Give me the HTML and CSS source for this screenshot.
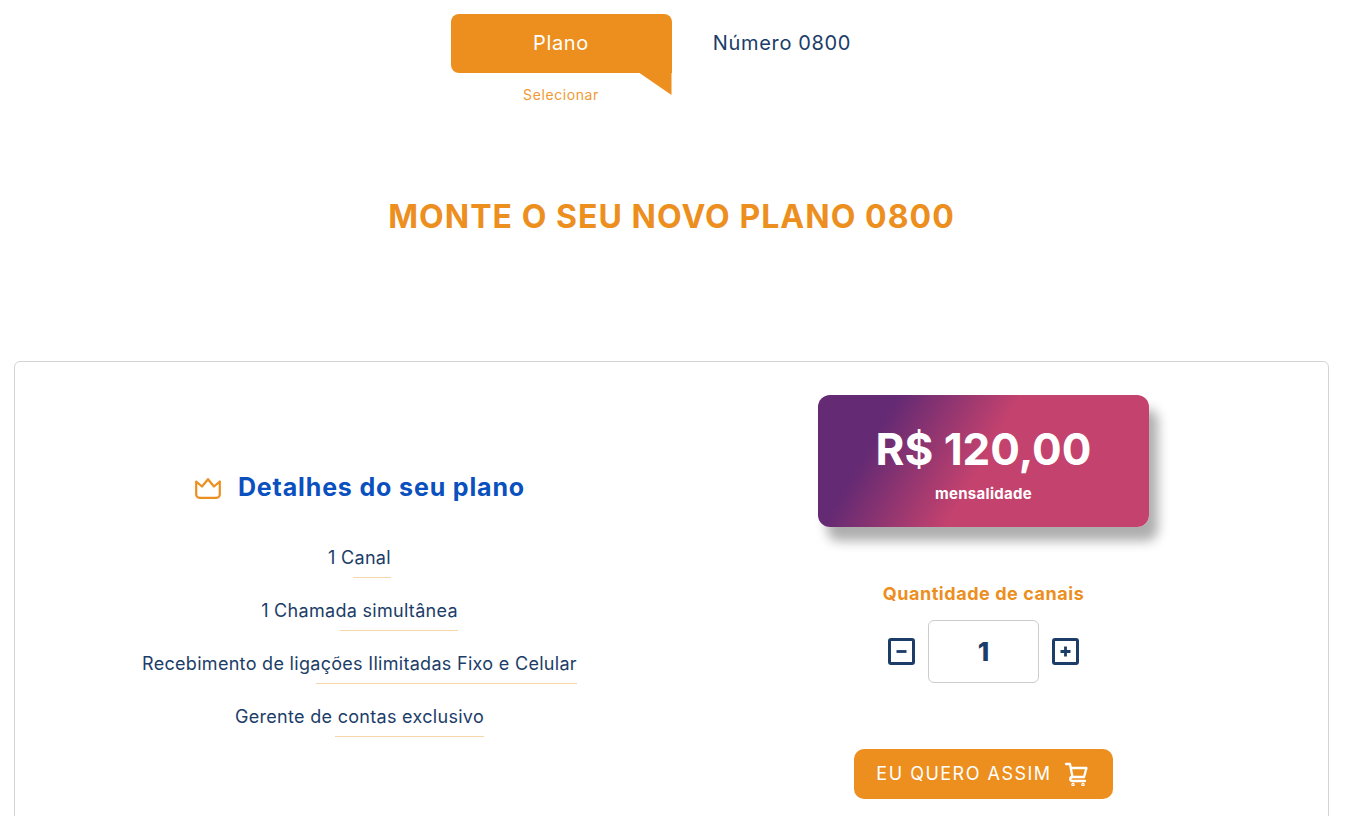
FILE: index.html
```html
<!DOCTYPE html>
<html lang="pt-BR">
<head>
  <meta charset="UTF-8">
  <title>Monte o seu novo plano 0800</title>
  <link rel="stylesheet" href="styles.css">
</head>
<body>
  <div class="page">
    <div class="tabs">
      <div class="tab active">
        <div class="tab-label">Plano</div>
        <div class="tab-caption">Selecionar</div>
      </div>
      <div class="tab">
        <div class="tab-label">Número 0800</div>
      </div>
    </div>

    <h1 class="title">MONTE O SEU NOVO PLANO 0800</h1>

    <div class="plan-card">
      <div class="details">
        <h2 class="details-title">
          <svg class="crown" width="26" height="21" viewBox="0 0 26 21" fill="none" stroke="#ec8f1f" stroke-width="2.2" stroke-linejoin="round">
            <path d="M1.2 3.5 L7 8.5 L13 1.2 L19 8.5 L24.8 3.5 V16.5 a3.3 3.3 0 0 1 -3.3 3.3 H4.5 a3.3 3.3 0 0 1 -3.3 -3.3 Z"/>
          </svg>
          <span>Detalhes do seu plano</span>
        </h2>
        <ul class="features">
          <li><span>1 Canal</span></li>
          <li><span>1 Chamada simultânea</span></li>
          <li><span>Recebimento de ligações Ilimitadas Fixo e Celular</span></li>
          <li><span>Gerente de contas exclusivo</span></li>
        </ul>
      </div>

      <div class="order">
        <div class="price-box">
          <div class="price">R$ 120,00</div>
          <div class="price-note">mensalidade</div>
        </div>

        <div class="qty-label">Quantidade de canais</div>
        <div class="qty">
          <svg width="27" height="27" viewBox="0 0 27 27" fill="none" stroke="#1b3d68">
            <rect x="1.5" y="1.5" width="24" height="24" rx="1.5" stroke-width="3"/>
            <path d="M8.5 13.5 H18.5" stroke-width="2.8"/>
          </svg>
          <div class="qty-value">1</div>
          <svg width="27" height="27" viewBox="0 0 27 27" fill="none" stroke="#1b3d68">
            <rect x="1.5" y="1.5" width="24" height="24" rx="1.5" stroke-width="3"/>
            <path d="M8.5 13.5 H18.5 M13.5 8.5 V18.5" stroke-width="2.8"/>
          </svg>
        </div>

        <button class="buy-btn">
          <span>EU QUERO ASSIM</span>
          <svg width="24" height="24" viewBox="0 0 24 24" fill="none" stroke="#fff" stroke-width="2.3" stroke-linecap="round" stroke-linejoin="round">
            <path d="M2 2 H6 L8.5 15 H20 L22.5 6 H6.8"/>
            <path d="M8.5 15 C5.5 15 5.5 19 8.5 19 H21"/>
            <circle cx="9" cy="22.5" r="0.6"/>
            <circle cx="19" cy="22.5" r="0.6"/>
          </svg>
        </button>
      </div>
    </div>
  </div>
</body>
</html>
```

FILE: styles.css
```css
* { box-sizing: border-box; margin: 0; padding: 0; }
html, body {
  height: 816px;
  overflow: hidden;
}
body {
  font-family: Inter, "Liberation Sans", sans-serif;
  background: #fff;
  color: #1b3d68;
}
.page {
  padding: 14px 23px 0 14px;
}

/* Tabs */
.tabs {
  display: flex;
  justify-content: center;
}
.tab {
  width: 221px;
  text-align: center;
}
.tab-label {
  height: 59px;
  line-height: 59px;
  font-size: 20px;
  letter-spacing: 0.65px;
}
.tab.active .tab-label {
  position: relative;
  background: #ec8f1f;
  color: #fff;
  border-radius: 8px 8px 0 8px;
}
.tab.active .tab-label::after {
  content: "";
  position: absolute;
  right: 0;
  top: 58px;
  width: 32px;
  height: 23px;
  background: #ec8f1f;
  clip-path: polygon(0 0, 100% 0, 100% 100%, 0 4%);
}
.tab-caption {
  margin-top: 13px;
  font-size: 14px;
  letter-spacing: 0.6px;
  line-height: 18px;
  color: #ef9a33;
}

.title {
  margin-top: 93px;
  height: 164px;
  text-align: center;
  font-size: 32px;
  font-weight: 700;
  line-height: 40px;
  letter-spacing: 1.05px;
  color: #ec8f1f;
}

/* Plan card */
.plan-card {
  display: grid;
  grid-template-columns: 624px 624px;
  padding: 33px 32.5px 0;
  height: 600px;
  border: 1px solid #d4d4d4;
  border-radius: 6px;
}
.details {
  padding-top: 74px;
  text-align: center;
}
.details-title {
  display: flex;
  justify-content: center;
  align-items: center;
  gap: 17px;
  height: 36px;
  font-size: 25px;
  font-weight: 700;
  letter-spacing: 0.85px;
  color: #0a50be;
}
.crown {
  flex: none;
  margin: 3px 0 0 1px;
}
.features {
  list-style: none;
  margin-top: 41px;
  font-size: 18px;
  letter-spacing: 0.3px;
  color: #1b3d68;
}
.features li {
  height: 53px;
}
.features span {
  display: inline-block;
  position: relative;
  height: 32px;
  line-height: 24px;
}
.features span::after {
  content: "";
  position: absolute;
  right: 0;
  bottom: 0;
  width: 60%;
  height: 1px;
  background: #f5d6a9;
}

.order {
  display: flex;
  flex-direction: column;
  align-items: center;
}
.price-box {
  width: 331px;
  height: 132px;
  padding-top: 28px;
  border-radius: 12px;
  text-align: center;
  color: #fff;
  background: linear-gradient(120deg, #642a73 20%, #c4426e 50%);
  box-shadow: 9px 14px 12px rgba(0, 0, 0, 0.32);
}
.price {
  font-size: 44px;
  font-weight: 700;
  line-height: 52px;
}
.price-note {
  margin-top: 10px;
  font-size: 15px;
  font-weight: 700;
  letter-spacing: 0.3px;
  line-height: 18px;
}
.qty-label {
  margin-top: 56px;
  font-size: 18px;
  font-weight: 700;
  letter-spacing: 0.55px;
  line-height: 22px;
  color: #ec8f1f;
}
.qty {
  display: flex;
  align-items: center;
  gap: 13px;
  margin-top: 15px;
}
.qty-value {
  width: 111px;
  height: 63px;
  line-height: 61px;
  text-align: center;
  border: 1px solid #ccc;
  border-radius: 6px;
  font-size: 26px;
  font-weight: 800;
  color: #1b3d68;
}
.buy-btn {
  display: flex;
  align-items: center;
  justify-content: center;
  gap: 12px;
  width: 259px;
  height: 50px;
  margin-top: 66px;
  padding-right: 3px;
  border: none;
  border-radius: 10px;
  background: #ec8f1f;
  color: #fff;
  font-family: inherit;
  font-size: 18px;
  letter-spacing: 1.5px;
  cursor: pointer;
}
.buy-btn span {
  margin-top: -2px;
}
```
